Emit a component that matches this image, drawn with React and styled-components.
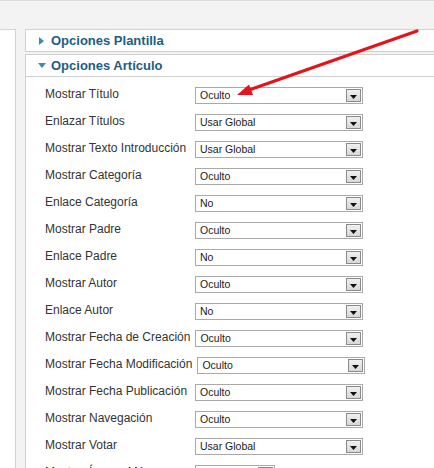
import React from "react";
import styled, { createGlobalStyle } from "styled-components";

const Global = createGlobalStyle`
  html, body { margin: 0; padding: 0; }
  body {
    background: #f3f3f3;
    font-family: "Liberation Sans", Arial, sans-serif;
    overflow: hidden;
  }
`;

const Page = styled.div`
  position: relative;
  width: 434px;
  height: 468px;
  overflow: hidden;
  background: #f3f3f3;
`;

const TopBand = styled.div`
  height: 28px;
  border-top: 1px solid #dedede;
  background: #f3f3f3;
`;

const Content = styled.div`
  display: flex;
  align-items: stretch;
  height: 440px;
`;

const SideBox = styled.div`
  flex: none;
  width: 15px;
  background: #fff;
  border-top: 1px solid #d2d2d2;
  border-right: 1px solid #d2d2d2;
`;

const Main = styled.div`
  flex: none;
  width: 520px;
  margin-left: 9px;
  display: flex;
  flex-direction: column;
  gap: 2px;
`;

const Panel = styled.div`
  background: #fff;
  border: 1px solid #d0d0d0;
  ${(p) => (p.$open ? "border-bottom: none; flex: 1;" : "")}
`;

const Header = styled.div`
  display: flex;
  align-items: center;
  height: 21px;
  padding-left: 11px;
  ${(p) => (p.$open ? "border-bottom: 1px solid #d0d0d0;" : "")}
`;

const Toggle = styled.span`
  flex: none;
  width: 9px;
  height: 21px;
  display: flex;
  align-items: center;
  justify-content: center;
`;

const Title = styled.span`
  margin-left: 5px;
  font-size: 13px;
  line-height: 21px;
  font-weight: bold;
  color: #1c5d85;
`;

const Body = styled.div`
  padding-top: 10px;
  display: flex;
  flex-direction: column;
`;

const Row = styled.div`
  display: flex;
  align-items: flex-start;
  height: 27px;
  padding-left: 19px;
`;

const Label = styled.span`
  flex: none;
  min-width: 150px;
  padding-right: 5px;
  box-sizing: border-box;
  white-space: nowrap;
  font-size: 12px;
  line-height: 15px;
  color: #333;
`;

const SelectBox = styled.div`
  flex: none;
  display: flex;
  align-items: center;
  box-sizing: border-box;
  width: ${(p) => p.$w}px;
  height: 17px;
  border: 1px solid #a9a9a9;
  background: #fff;
  padding: 0 1px 0 4px;
`;

const Value = styled.span`
  flex: 1;
  font-family: "Liberation Sans", Arial, sans-serif;
  font-size: 10.5px;
  line-height: 15px;
  color: #1a1a1a;
  white-space: nowrap;
  overflow: hidden;
`;

const DropButton = styled.span`
  flex: none;
  width: 15px;
  height: 13px;
  box-sizing: border-box;
  border: 1px solid #8a8a8a;
  background: linear-gradient(#f0f0f0, #d8d8d8);
  display: flex;
  align-items: center;
  justify-content: center;
  padding-top: 2px;
`;

const ArrowLayer = styled.svg`
  position: absolute;
  left: 0;
  top: 0;
  pointer-events: none;
`;

const RightTri = () => (
  <svg width="5" height="8" viewBox="0 0 5 8">
    <polygon points="0,0 5,4 0,8" fill="#3b8ea6" />
  </svg>
);

const DownTri = () => (
  <svg width="8" height="5" viewBox="0 0 8 5">
    <polygon points="0,0 8,0 4,5" fill="#3b8ea6" />
  </svg>
);

const Caret = () => (
  <svg width="7" height="4" viewBox="0 0 7 4">
    <polygon points="0,0 7,0 3.5,4" fill="#111" />
  </svg>
);

const rows = [
  ["Mostrar Título", "Oculto"],
  ["Enlazar Títulos", "Usar Global"],
  ["Mostrar Texto Introducción", "Usar Global"],
  ["Mostrar Categoría", "Oculto"],
  ["Enlace Categoría", "No"],
  ["Mostrar Padre", "Oculto"],
  ["Enlace Padre", "No"],
  ["Mostrar Autor", "Oculto"],
  ["Enlace Autor", "No"],
  ["Mostrar Fecha de Creación", "Oculto"],
  ["Mostrar Fecha Modificación", "Oculto"],
  ["Mostrar Fecha Publicación", "Oculto"],
  ["Mostrar Navegación", "Oculto"],
  ["Mostrar Votar", "Usar Global"],
  ["Mostrar Íconos Más", "Mostrar", 80],
];

export default function App() {
  return (
    <>
      <Global />
      <Page>
        <TopBand />
        <Content>
          <SideBox />
          <Main>
            <Panel>
              <Header>
                <Toggle>
                  <RightTri />
                </Toggle>
                <Title>Opciones Plantilla</Title>
              </Header>
            </Panel>
            <Panel $open>
              <Header $open>
                <Toggle>
                  <DownTri />
                </Toggle>
                <Title>Opciones Artículo</Title>
              </Header>
              <Body>
                {rows.map(([label, value, w]) => (
                  <Row key={label}>
                    <Label>{label}</Label>
                    <SelectBox $w={w || 168}>
                      <Value>{value}</Value>
                      <DropButton>
                        <Caret />
                      </DropButton>
                    </SelectBox>
                  </Row>
                ))}
              </Body>
            </Panel>
          </Main>
        </Content>
        <ArrowLayer width="434" height="468" viewBox="0 0 434 468">
          <line
            x1="417"
            y1="31"
            x2="249"
            y2="90"
            stroke="#e3141b"
            strokeWidth="3.2"
            strokeLinecap="round"
          />
          <polygon points="237,95 253,95 249,84.5" fill="#e3141b" />
        </ArrowLayer>
      </Page>
    </>
  );
}
